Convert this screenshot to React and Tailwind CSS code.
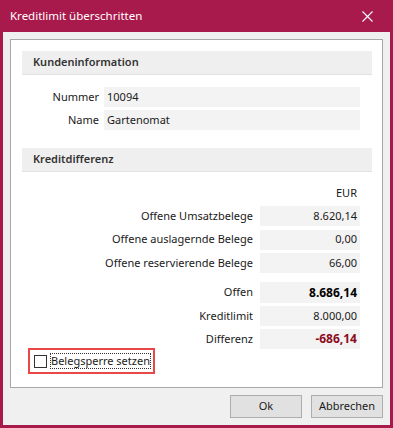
import React, { useState } from "react";

const font = { fontFamily: '"Segoe UI", "Noto Sans", "Liberation Sans", sans-serif' };

const Field = ({ children, className = "" }) => (
  <div className={`h-[20px] bg-[#f3f3f3] flex items-center ${className}`}>{children}</div>
);

const SectionHeader = ({ title }) => (
  <div className="h-[24px] bg-[#efefef] border-b border-[#e2e2e2] flex items-center pl-[11px] text-[11px] font-semibold text-[#333]">
    {title}
  </div>
);

export default function App() {
  const [locked, setLocked] = useState(false);

  const kunde = [
    { label: "Nummer", value: "10094" },
    { label: "Name", value: "Gartenomat" },
  ];

  const offene = [
    { label: "Offene Umsatzbelege", value: "8.620,14" },
    { label: "Offene auslagernde Belege", value: "0,00" },
    { label: "Offene reservierende Belege", value: "66,00" },
  ];

  return (
    <div className="w-[393px] h-[428px] flex flex-col bg-[#a91a4c] text-[#1a1a1a]" style={font}>
      {/* Title bar */}
      <div className="h-[32px] flex items-center justify-between pl-[10px] pr-[20px] text-white text-[11.5px]">
        <span>Kreditlimit überschritten</span>
        <svg width="11" height="11" viewBox="0 0 11 11" stroke="white" strokeWidth="1.1">
          <path d="M0.5 0.5 L10.5 10.5 M10.5 0.5 L0.5 10.5" />
        </svg>
      </div>

      {/* Body */}
      <div className="flex-1 mx-[3px] mb-[3px] bg-[#f0f0f0] flex flex-col pt-[7px] pl-[7px] pr-[7px]">
        <div className="h-[349px] bg-white border border-[#a8a8a8] pt-[11px] pl-[11px] pr-[10px] text-[11px]">
          <SectionHeader title="Kundeninformation" />
          <div className="flex flex-col gap-[3px] mt-[12px] pr-[12px]">
            {kunde.map((r) => (
              <div key={r.label} className="flex items-center gap-[5px]">
                <div className="w-[77px] text-right">{r.label}</div>
                <Field className="flex-1 pl-[3px]">{r.value}</Field>
              </div>
            ))}
          </div>

          <div className="mt-[18px]">
            <SectionHeader title="Kreditdifferenz" />
          </div>

          <div className="flex flex-col pr-[12px]">
            <div className="h-[20px] mt-[11px] flex items-center justify-end pr-[3px]">EUR</div>
            <div className="flex flex-col gap-[3.5px] mt-[3px]">
              {offene.map((r) => (
                <div key={r.label} className="flex items-center gap-[7px]">
                  <div className="flex-1 text-right">{r.label}</div>
                  <Field className="w-[100px] justify-end pr-[3px]">{r.value}</Field>
                </div>
              ))}
            </div>
            <div className="flex flex-col gap-[3px] mt-[9px]">
              <div className="flex items-center gap-[7px]">
                <div className="flex-1 text-right">Offen</div>
                <Field className="w-[100px] h-[21px] justify-end pr-[3px] font-bold text-[12px] text-black">8.686,14</Field>
              </div>
              <div className="flex items-center gap-[7px]">
                <div className="flex-1 text-right">Kreditlimit</div>
                <Field className="w-[100px] justify-end pr-[3px]">8.000,00</Field>
              </div>
              <div className="flex items-center gap-[7px]">
                <div className="flex-1 text-right">Differenz</div>
                <Field className="w-[100px] justify-end pr-[3px] font-bold text-[12px] text-[#8c0d1e]">-686,14</Field>
              </div>
            </div>
          </div>

          <div className="mt-[-1px] ml-[6px] w-[127px] h-[26px] border-2 border-[#e84848] flex items-center pl-[4px] gap-[3px] whitespace-nowrap">
            <button
              onClick={() => setLocked(!locked)}
              className="w-[13px] h-[13px] shrink-0 border border-[#333] bg-white flex items-center justify-center"
            >
              {locked && (
                <svg width="9" height="9" viewBox="0 0 9 9" fill="none" stroke="#222" strokeWidth="1.4">
                  <path d="M1 4.5 L3.5 7 L8 1.5" />
                </svg>
              )}
            </button>
            <span className="border border-dotted border-[#333] leading-[14px]">Belegsperre setzen</span>
          </div>
        </div>

        {/* Buttons */}
        <div className="flex justify-end gap-[9px] mt-[7px] text-[11px]">
          <button className="w-[72px] h-[23px] bg-[#e1e1e1] border border-[#adadad]">Ok</button>
          <button className="w-[72px] h-[23px] bg-[#e1e1e1] border border-[#adadad]">Abbrechen</button>
        </div>
      </div>
    </div>
  );
}
